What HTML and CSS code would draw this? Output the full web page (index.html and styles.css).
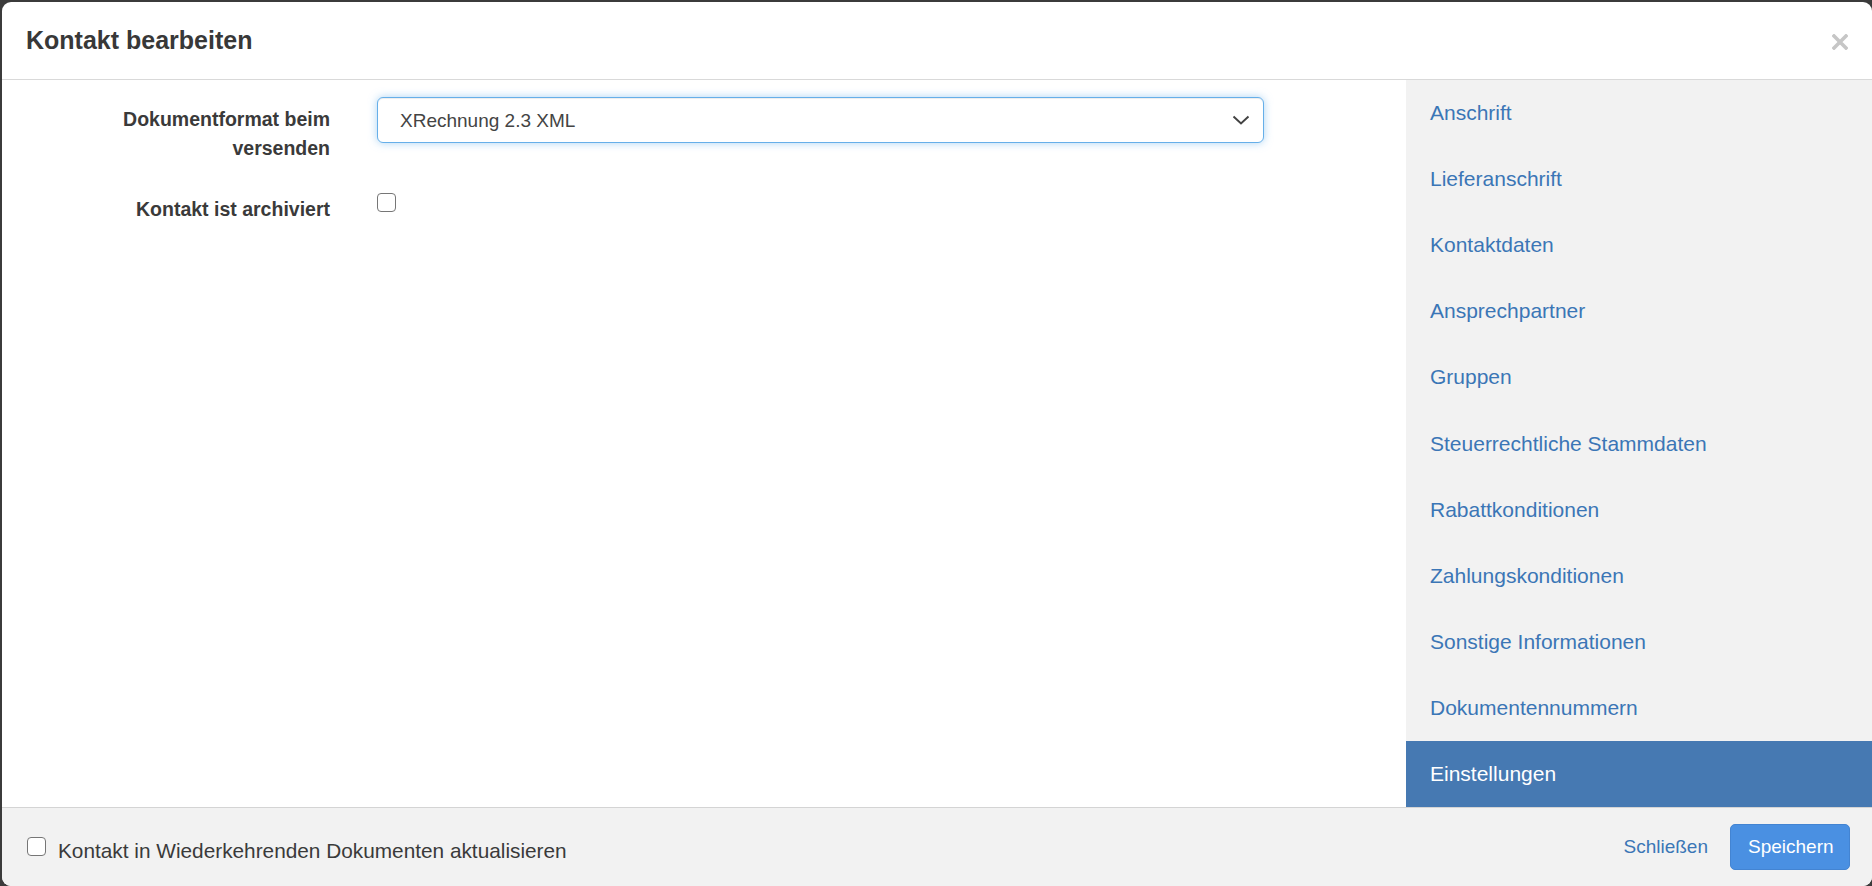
FILE: index.html
```html
<!DOCTYPE html>
<html lang="de">
<head>
    <meta charset="UTF-8">
    <title>Kontakt bearbeiten</title>
    <link rel="stylesheet" href="styles.css">
</head>
<body>

    <div class="modal">
        <div class="modal-header">
            <h4 class="modal-title">Kontakt bearbeiten</h4>
            <button class="close" type="button">
                <svg width="16" height="16" viewBox="0 0 16 16">
                    <path d="M2 2 L14 14 M14 2 L2 14" stroke="#c6c6c6" stroke-width="3.6" stroke-linecap="square"/>
                </svg>
            </button>
        </div>

        <div class="modal-body">
            <div class="form">
                <div class="form-group">
                    <label class="control-label">Dokumentformat beim versenden</label>
                    <div class="control select-wrap">
                        <select class="form-control">
                            <option>XRechnung 2.3 XML</option>
                        </select>
                        <svg class="chevron" width="18" height="10" viewBox="0 0 18 10">
                            <path d="M1.5 1.5 L9 8.5 L16.5 1.5" fill="none" stroke="#444" stroke-width="2"/>
                        </svg>
                    </div>
                </div>
                <div class="form-group">
                    <label class="control-label">Kontakt ist archiviert</label>
                    <div class="control">
                        <span class="checkbox"></span>
                    </div>
                </div>
            </div>

            <ul class="side-nav">
                <li><a href="#">Anschrift</a></li>
                <li><a href="#">Lieferanschrift</a></li>
                <li><a href="#">Kontaktdaten</a></li>
                <li><a href="#">Ansprechpartner</a></li>
                <li><a href="#">Gruppen</a></li>
                <li><a href="#">Steuerrechtliche Stammdaten</a></li>
                <li><a href="#">Rabattkonditionen</a></li>
                <li><a href="#">Zahlungskonditionen</a></li>
                <li><a href="#">Sonstige Informationen</a></li>
                <li><a href="#">Dokumentennummern</a></li>
                <li class="active"><a href="#">Einstellungen</a></li>
            </ul>
        </div>

        <div class="modal-footer">
            <label class="footer-check">
                <span class="checkbox"></span>
                Kontakt in Wiederkehrenden Dokumenten aktualisieren
            </label>
            <div class="footer-buttons">
                <button class="btn btn-link" type="button">Schließen</button>
                <button class="btn btn-primary" type="button">Speichern</button>
            </div>
        </div>
    </div>

</body>
</html>
```

FILE: styles.css
```css
html, body {
    margin: 0;
    padding: 0;
    background-color: #3b3b3b;
    height: 100%;
    overflow: hidden;
}

body {
    font-family: "Liberation Sans", Arial, sans-serif;
    color: #333;
    font-size: 21px;
    padding: 2px 0 0 2px;
    box-sizing: border-box;
}

.modal {
    width: 1870px;
    height: 884px;
    background-color: #fff;
    border-radius: 9px;
    overflow: hidden;
    display: flex;
    flex-direction: column;
}

.modal-header {
    height: 77px;
    border-bottom: 1px solid #d9d9d9;
    display: flex;
    align-items: center;
    justify-content: space-between;
    padding: 0 24px 0 24px;
    flex-shrink: 0;
}

.modal-title {
    margin: 0;
    font-size: 25px;
    font-weight: bold;
    color: #383838;
}

.close {
    background: none;
    border: none;
    padding: 0;
    margin-top: 2px;
    display: flex;
}

.modal-body {
    display: flex;
    height: 727px;
    flex-shrink: 0;
}

.form {
    flex: 1;
    padding-top: 17px;
}

.form-group {
    display: flex;
    margin-bottom: 24px;
}

.control-label {
    width: 300px;
    margin-left: 28px;
    text-align: right;
    font-weight: bold;
    font-size: 19.5px;
    line-height: 29px;
    padding-top: 8px;
    color: #3a3a3a;
}

.control {
    margin-left: 47px;
}

.select-wrap {
    position: relative;
}

.form-control {
    width: 887px;
    height: 46px;
    border: 1px solid #66afe9;
    border-radius: 6px;
    box-shadow: inset 0 1px 1px rgba(0, 0, 0, 0.075), 0 0 9px rgba(102, 175, 233, 0.55);
    background-color: #fff;
    font-family: "Liberation Sans", Arial, sans-serif;
    font-size: 19px;
    color: #444;
    padding: 0 0 0 22px;
    appearance: none;
    -webkit-appearance: none;
    outline: none;
}

.chevron {
    position: absolute;
    right: 14px;
    top: 18px;
}

.checkbox {
    display: inline-block;
    width: 17px;
    height: 17px;
    border: 1.5px solid #767676;
    border-radius: 4px;
    background-color: #fff;
    margin-top: 6px;
}

.side-nav {
    list-style: none;
    margin: 0;
    padding: 0;
    width: 466px;
    background-color: #f2f2f2;
}

.side-nav li a {
    display: flex;
    align-items: center;
    height: 66.1px;
    padding-left: 24px;
    color: #3b76b6;
    text-decoration: none;
    font-size: 21px;
}

.side-nav li.active a {
    background-color: #4679b2;
    color: #fff;
}

.modal-footer {
    flex: 1;
    background-color: #f2f2f2;
    border-top: 1px solid #d4d4d4;
    display: flex;
    align-items: center;
    justify-content: space-between;
    padding: 0 22px 0 25px;
}

.footer-check {
    display: flex;
    align-items: center;
    font-size: 20.8px;
    color: #3a3a3a;
    margin-top: 7px;
}

.footer-check .checkbox {
    margin: -9px 12px 0 0;
}

.footer-buttons {
    display: flex;
    align-items: center;
    gap: 4px;
}

.btn {
    font-family: "Liberation Sans", Arial, sans-serif;
    font-size: 19px;
    border: 1px solid transparent;
    border-radius: 5px;
    height: 46px;
    padding: 0 17px;
    cursor: pointer;
}

.btn-link {
    background: none;
    color: #3b76b6;
}

.btn-primary {
    background-color: #4a90e2;
    border-color: #4384d2;
    color: #fff;
    width: 120px;
}
```
